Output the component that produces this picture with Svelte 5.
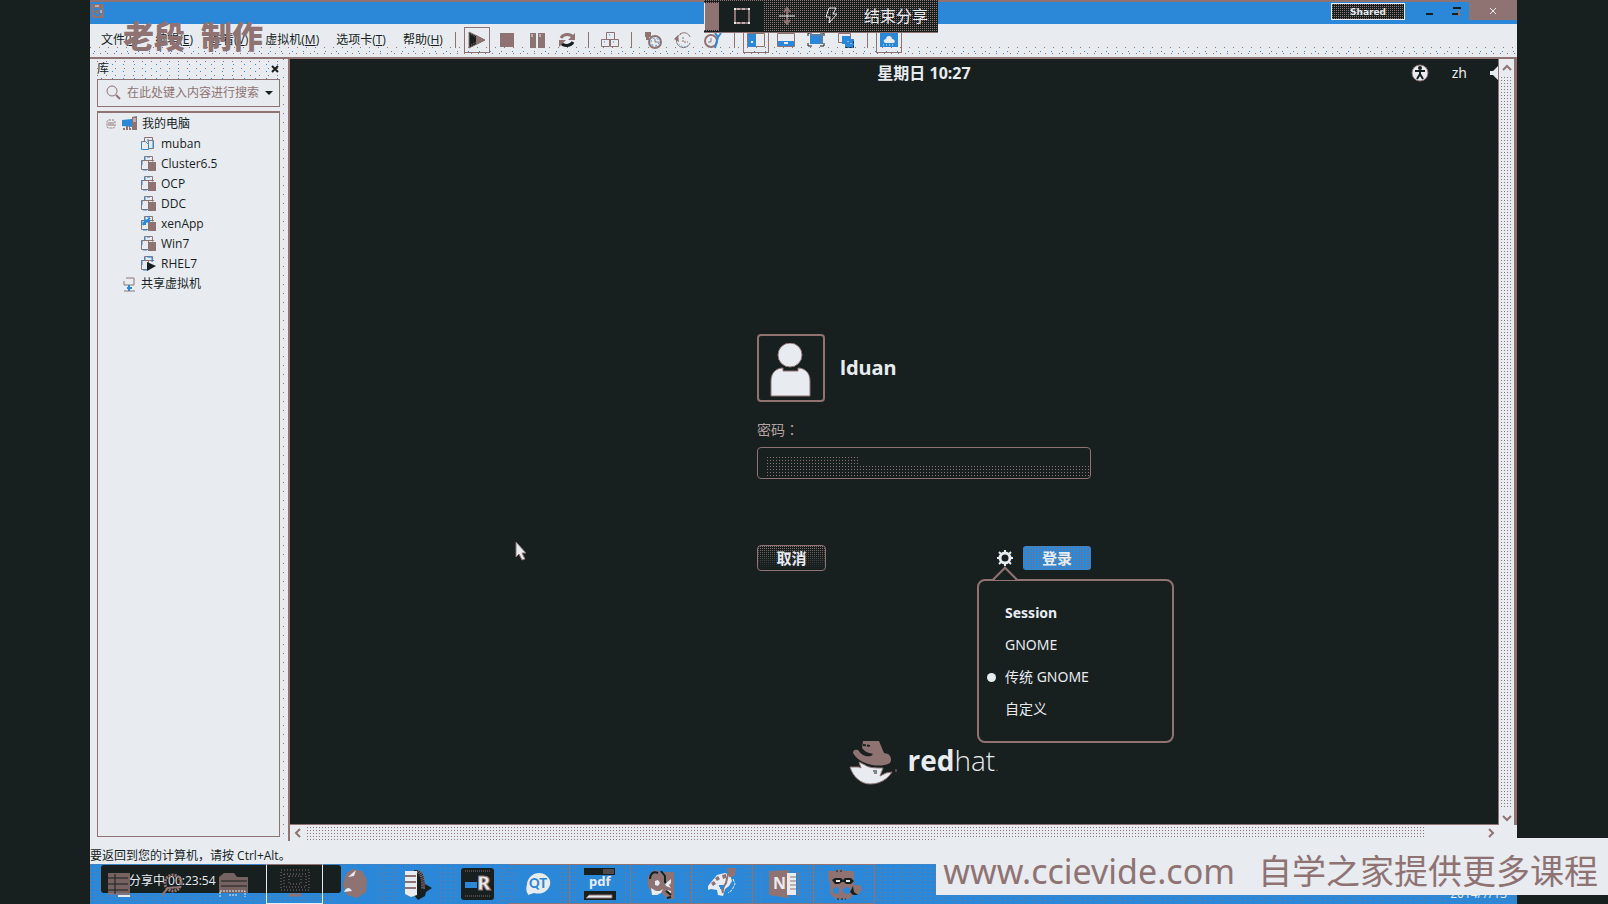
<script>
  const menus = [
    ['文件', 'F'], ['编辑', 'E'], ['查看', 'V'], ['虚拟机', 'M'], ['选项卡', 'T'], ['帮助', 'H']
  ];
  const machines = [
    { name: 'muban', state: 'plain' },
    { name: 'Cluster6.5', state: 'off' },
    { name: 'OCP', state: 'off' },
    { name: 'DDC', state: 'off' },
    { name: 'xenApp', state: 'win' },
    { name: 'Win7', state: 'off' },
    { name: 'RHEL7', state: 'on' }
  ];
  const tools = [
    { id: 'play', label: '启动', framed: true },
    { id: 'stop', label: '停止' },
    { id: 'pause', label: '挂起' },
    { id: 'cycle', label: '重新启动' },
    { id: 'sep1' },
    { id: 'cad', label: '发送按键' },
    { id: 'sep2' },
    { id: 'snap', label: '拍摄快照' },
    { id: 'revert', label: '恢复快照' },
    { id: 'manage', label: '管理快照' },
    { id: 'sep3' },
    { id: 'side', label: '显示库', framed: true },
    { id: 'thumb', label: '显示缩略图栏' },
    { id: 'full', label: '全屏' },
    { id: 'unity', label: 'Unity' },
    { id: 'sep4' },
    { id: 'console', label: '控制台视图', framed: true }
  ];
  const tasks = ['server', 'browser', 'folder', 'vm', 'globe', 'db', 'r', 'qt', 'pdf', 'faces', 'paint', 'note', 'qq'];
  const sessions = ['GNOME', '传统 GNOME', '自定义'];
  let session = $state('传统 GNOME');
  let query = $state('');
  let password = $state('');
</script>

{#snippet toolIcon(id)}
  <svg width="20" height="20" viewBox="0 0 20 20" fill="none" stroke="#8f7372" stroke-width="1">
    {#if id === 'play'}
      <path d="M2 2v16l16-8z" fill="#171f1f" /><path d="M9 5v10l9-5z" fill="#8f7372" stroke="none" /><path d="M4 4l9 6-9 5" stroke-dasharray="1 1" />
    {:else if id === 'stop'}
      <path d="M3 3h14v14H3z" fill="#8f7372" stroke="none" />
    {:else if id === 'pause'}
      <path d="M3 3h6v15H3zM11 3h7v15h-7z" fill="#8f7372" stroke="none" /><path d="M5 4v3M13 4v3" stroke="#e8ebf0" />
    {:else if id === 'cycle'}
      <path d="M4 8a7 6 0 0 1 12-1" stroke-width="3" /><path d="M18 3v7h-7z" fill="#8f7372" stroke="none" /><path d="M16 12a7 6 0 0 1-12 1" stroke="#171f1f" stroke-width="3" /><path d="M2 17v-7h7z" fill="#8f7372" stroke="none" />
    {:else if id === 'cad'}
      <path d="M6.500 2.500h8v7h-8zM1.500 9.500h8v7h-8zM10.500 9.500h8v7h-8z" /><path d="M9 5h1M4 12h1M13 12h1" stroke="#2b88d8" />
    {:else if id === 'snap'}
      <circle cx="12" cy="12" r="6" stroke-width="2" /><circle cx="12" cy="12" r="4" stroke="#2b88d8" stroke-dasharray="2 2" /><path d="M2 2h6v5H6v3H3V7H2z" fill="#8f7372" stroke="none" /><path d="M12 9v3h3" />
    {:else if id === 'revert'}
      <path d="M8 4a7 7 0 1 0 9 9M7 4c5-3 9 0 10 3" /><path d="M1 9l4-4 1 7z" fill="#8f7372" stroke="none" /><path d="M10 7v5h5" stroke-dasharray="2 1" /><path d="M6 14a7 6 0 0 0 9 2" stroke="#2b88d8" stroke-dasharray="1 2" />
    {:else if id === 'manage'}
      <circle cx="8" cy="11" r="6" stroke-width="2" /><path d="M8 8v4H5" /><path d="M12 3l3 4 3-4M15 7l-3 11" stroke="#2b88d8" stroke-width="2" />
    {:else if id === 'side'}
      <path d="M1.500 3.500h17v13h-17z" /><path d="M2 4h8v13H2z" fill="#2b88d8" stroke="none" /><path d="M5 11h2v2H5z" fill="#e8ebf0" stroke="none" />
    {:else if id === 'thumb'}
      <path d="M1.500 3.500h17v13h-17z" /><path d="M2 11h16v5H2z" fill="#2b88d8" stroke="none" /><path d="M8 13h4" stroke="#e8ebf0" stroke-width="2" />
    {:else if id === 'full'}
      <path d="M4 4h13v10H4z" fill="#2b88d8" stroke="none" /><path d="M2 6V3h4M14 3h4v3M2 13v3h4M14 16h4v-3" stroke="#171f1f" /><path d="M4 5h12v9" />
    {:else if id === 'unity'}
      <path d="M2.500 3.500h12v9h-12z" /><path d="M6 6h8v8H6zM9 9h9v9H9z" fill="#2b88d8" stroke="none" /><path d="M9.500 17.500h8v-8" stroke="#171f1f" stroke-dasharray="2 2" /><path d="M12 11v1M15 13v1" stroke="#e8ebf0" />
    {:else if id === 'console'}
      <path d="M1 3h18v14H1z" fill="#2b88d8" stroke="none" /><path d="M7 9c0-4 6-4 6 0 3 0 4 4 1 4H7c-3 0-3-4 0-4z" fill="#e8ebf0" stroke="none" /><path d="M4 15h12" stroke="#e8ebf0" stroke-dasharray="1 2" />
    {/if}
  </svg>
{/snippet}

{#snippet vmIcon(state)}
  <svg width="16" height="16" viewBox="0 0 16 16" fill="#e8ebf0" stroke="#8f7372">
    {#if state === 'plain'}
      <path d="M3.500 5.500v-4h8v4" /><path d="M7.500 4.500h5v8h-5z" /><path d="M7 3v3M12 5v7" stroke="#2b88d8" /><path d="M.5 5.500h4l3 3v5h-7z" stroke="#2b88d8" /><path d="M1 5.500h3" />
    {:else}
      <path d="M3.500 4.500v-4h8v5" /><path d="M4 1v3M6 1h3" stroke="#2b88d8" />
      <path d="M.5 4.500h7v9h-7z" /><path d="M1 4v5M2 14h4" stroke="#2b88d8" /><path d="M6 4.500h7" />
      {#if state === 'on'}
        <path d="M8 1h3v5" stroke="#2b88d8" fill="none" /><path d="M6 6v9l9-5z" fill="#171f1f" stroke="none" />
      {:else}
        {#if state === 'win'}<path d="M2 9l2-4 3-1 2-2M4 9V6l5-1" fill="none" stroke="#2b88d8" stroke-width="2" />{/if}
        <path d="M7 8V6h8v9H7z" fill="#8f7372" stroke="none" />
      {/if}
    {/if}
  </svg>
{/snippet}

{#snippet taskIcon(id)}
  <svg width="36" height="36" viewBox="0 0 36 36" fill="none" stroke="none">
    {#if id === 'server'}
      <path d="M10 7h22v22H10z" fill="#8f7372" opacity=".8" /><path d="M10 12h20M10 18h20M10 24h20M17 8v20" stroke="#171f1f" /><path d="M20 29h12v2H20z" fill="#e8ebf0" />
    {:else if id === 'browser'}
      <circle cx="18" cy="17" r="8" stroke="#8f7372" stroke-width="3" stroke-dasharray="2 1" /><path d="M7 29l6-7 13-1" stroke="#8f7372" stroke-width="2" />
    {:else if id === 'folder'}
      <path d="M3 11l5-4h10l3 4h11v16H3z" fill="#8f7372" opacity=".8" /><path d="M5 15h26M5 20h26" stroke="#171f1f" /><path d="M4 31v-6h25v6M13 29h9" stroke="#e8ebf0" stroke-dasharray="2 1" />
    {:else if id === 'vm'}
      <path d="M4 4h28v20H4zM7 8h22v13H7zM12 10h12v8H12z" stroke="#8f7372" stroke-dasharray="1 2" /><path d="M6 29h24" stroke="#2b88d8" stroke-width="2" stroke-dasharray="3 2" /><path d="M12 29h12" stroke="#8f7372" stroke-width="3" />
    {:else if id === 'globe'}
      <path d="M8 8l6-5 10 2 5 9-1 12-9 6-10-3-4-10z" fill="#8f7372" /><path d="M10 11l8-7-2 6zM6 26c3-6 6-4 8-1z" fill="#e8ebf0" />
    {:else if id === 'db'}
      <path d="M15 4c8 0 10 5 10 9l1 5 7 4-6 4-1 4-7 4-4-5z" fill="#171f1f" /><path d="M19 5c4 3 6 9 5 18" stroke="#8f7372" stroke-width="4" stroke-dasharray="1 1" /><path d="M6 5h12v24l-6 2-6-3z" fill="#e8ebf0" /><path d="M6 10h11M6 16h11M6 22h11" stroke="#8f7372" stroke-width="2" />
    {:else if id === 'r'}
      <rect x="1" y="2" width="33" height="32" rx="3" fill="#171f1f" /><path d="M5 5h25M5 30h25" stroke="#8f7372" stroke-dasharray="1 1" /><path d="M5 16h12v6H5z" fill="#2b88d8" /><text x="17" y="24" font-family="Open Sans" font-weight="800" font-size="20" fill="#e8ebf0" stroke="#8f7372">R</text>
    {:else if id === 'qt'}
      <path d="M7 28c-2-3-2-5-1-10 1-8 9-13 17-10 8 4 8 12 2 17-4 3-8 3-12 2l-6 2z" fill="#e8ebf0" /><text x="8" y="22" font-family="Lato" font-weight="900" font-size="13" fill="#2b88d8">QT</text>
    {:else if id === 'pdf'}
      <path d="M2 2h31v7H2zM2 25h32v9H2z" fill="#171f1f" /><path d="M21 3h11v5H21z" fill="#8f7372" opacity=".5" /><path d="M4 32l3-3h23v3z" fill="#e8ebf0" stroke="#8f7372" /><text x="7" y="20" font-family="Noto Sans" font-weight="700" font-size="13" fill="#e8ebf0">pdf</text>
    {:else if id === 'faces'}
      <path d="M7 8c3-5 9-4 12 0l3-2h9v27h-6l-6-6H9l-4-7V11z" fill="#8f7372" />
      <path d="M7 13c0-5 3-8 8-6M18 5l4 5v6l2 3M23 25l5 4M24 32l4-1" stroke="#171f1f" stroke-width="2" />
      <path d="M12 15l3-1 2 3-2 3-3-1zM8 22l5 3h4l3-2-2 4-4 2H9zM22 18l6-5v4l-2 2 2 3-5-2zM24 24l4 1v2z" fill="#e8ebf0" />
    {:else if id === 'paint'}
      <path d="M4 20l4-5 5-6 8-2 5 2 2 6-3 5-4 3-2 7-5-1-1-5-6-1-3 1z" fill="#e8ebf0" />
      <path d="M7 17l3-2 2 3-3 2zM11 12l3-2 2 3-3 2zM18 9l4-1v4l-3 1z" fill="#8f7372" />
      <path d="M24 8l-2 9-4 6 1 4M24 3h7l-1 6-4 1z" stroke="#8f7372" stroke-width="2" fill="#8f7372" />
      <path d="M15 20h5M16 22h3" stroke="#2b88d8" stroke-width="2" /><path d="M29 13l2 5-3 6-4 3" stroke="#e8ebf0" stroke-dasharray="3 1" />
    {:else if id === 'note'}
      <path d="M4 5l20-1v28L4 29z" fill="#8f7372" /><path d="M22 7h9v22h-9z" fill="#e8ebf0" /><path d="M25 11h6M25 15h6M25 19h6M25 23h6M31 7h3v22h-3" stroke="#8f7372" /><text x="8" y="23" font-family="Open Sans" font-weight="700" font-size="16" fill="#e8ebf0">N</text>
    {:else}
      <path d="M2 5h7l4-2 6 2h9v14h6l2 4-3 5-6 1-4 4H10l-6-5V17l-2-3z" fill="#8f7372" />
      <path d="M6 14l3-2h6l2 2 2-2h6l3 3-3 3h-5l-2-2h-2l-3 2H9z" fill="#171f1f" /><path d="M10 15h4M20 15h4" stroke="#e8ebf0" stroke-width="2" />
      <path d="M7 23l3-2 3 1v5l-4 1-2-2zM17 23l3-2 4 1v5l-4 1-3-2z" fill="#2b88d8" /><path d="M27 20l1 6 4 3h-5l-3-3z" fill="#171f1f" /><path d="M10 5h6M11 33h9" stroke="#171f1f" stroke-dasharray="2 2" />
    {/if}
  </svg>
{/snippet}

<div class="desktop">
  <div class="window">
    <header class="titlebar">
      <svg class="app" width="16" height="18" viewBox="0 0 16 18"><path d="M1 2h13v14H2z" fill="#8f7372" /><path d="M5 7h5v6H5z" fill="none" stroke="#2b88d8" stroke-width="2" stroke-dasharray="3 1" /><path d="M5 4h4M11 8v3" stroke="#e8ebf0" /></svg>
      <button class="shared">Shared</button>
      <button class="win" aria-label="最小化"><svg width="12" height="12"><path d="M2 8h7v2H2z" fill="#171f1f" /></svg></button>
      <button class="win" aria-label="还原"><svg width="12" height="12"><path d="M3 2h8v2H3zM2 8h6v2H2z" fill="#171f1f" /><path d="M9 5v6" stroke="#8f7372" stroke-width="2" /></svg></button>
      <button class="win close" aria-label="关闭"><svg width="8" height="8"><path d="M1 1l6 6M7 1L1 7" stroke="#e8ebf0" stroke-width="1" /></svg></button>
    </header>

    <div class="menubar">
      <nav class="menus">
        {#each menus as [name, key]}
          <button>{name}(<u>{key}</u>)</button>
        {/each}
      </nav>
      <div class="tools">
        <i class="sep first"></i>
        {#each tools as t (t.id)}
          {#if t.label}
            <button class:framed={t.framed} aria-label={t.label}>{@render toolIcon(t.id)}</button>
          {:else}
            <i class="sep"></i>
          {/if}
        {/each}
      </div>
    </div>

    <main class="work">
      <aside class="library">
        <div class="lib-head"><span>库</span><button aria-label="关闭库"><svg width="8" height="8"><path d="M1 1l6 6M7 1L1 7" stroke="#171f1f" stroke-width="2" /></svg></button></div>
        <div class="search">
          <svg width="15" height="16" viewBox="0 0 15 16" fill="none" stroke="#8f7372"><circle cx="6" cy="6" r="5" /><path d="M10 10l4 4" stroke-width="2" /></svg>
          <input aria-label="搜索" placeholder="在此处键入内容进行搜索" bind:value={query} />
          <button aria-label="搜索选项"><svg width="8" height="4"><path d="M0 0h8L4 4z" fill="#171f1f" /></svg></button>
        </div>
        <ul class="tree">
          <li class="root">
            <svg width="10" height="10" viewBox="0 0 10 10" fill="none" stroke="#8f7372"><rect x="1" y="1" width="8" height="8" rx="2" stroke-dasharray="2 1" /><path d="M2 4h6M2 6h6" /></svg>
            <svg width="16" height="16" viewBox="0 0 16 16"><path d="M11 1l5-1v14h-5z" fill="#8f7372" /><path d="M12 3h3M12 5h3" stroke="#e8ebf0" /><path d="M1 4l10-1v8l-10-1z" fill="#2b88d8" /><path d="M2 13h9M5 11h4" stroke="#8f7372" stroke-width="2" stroke-dasharray="2 1" /></svg>
            <span>我的电脑</span>
          </li>
          {#each machines as m}
            <li class="child">{@render vmIcon(m.state)}<span>{m.name}</span></li>
          {/each}
          <li class="shared-vms">
            <svg width="13" height="15" viewBox="0 0 13 15" fill="none" stroke="#8f7372"><path d="M3 1h8v7H1V4" /><path d="M1 14h11" /><path d="M6 8v6M4 11h5" stroke="#2b88d8" stroke-width="2" /></svg>
            <span>共享虚拟机</span>
          </li>
        </ul>
      </aside>

      <section class="viewer">
        <div class="screen">
          <div class="guest">
            <div class="topbar">
              <time>星期日 10:27</time>
              <div class="indicators">
                <svg width="18" height="18" viewBox="0 0 18 18"><circle cx="9" cy="9" r="8" fill="#e8ebf0" stroke="#8f7372" /><circle cx="9" cy="4" r="2" fill="#171f1f" /><path d="M4 7h10M9 6v5M9 10l-3 5M9 10l3 5" stroke="#171f1f" stroke-width="2" /></svg>
                <span>zh</span>
                <svg width="14" height="14" viewBox="0 0 14 14"><path d="M0 5h3l5-5v14L3 9H0z" fill="#e8ebf0" /><path d="M10 3c3 2 3 6 0 8" fill="none" stroke="#e8ebf0" /></svg>
              </div>
            </div>
            <form class="login" onsubmit={(e) => e.preventDefault()}>
              <div class="user">
                <div class="avatar"><svg width="42" height="54" viewBox="0 0 42 54" fill="#e8ebf0" stroke="#8f7372"><circle cx="20" cy="12" r="12" /><path d="M1 53V38c0-8 5-13 12-13v3h15v-3c7 0 12 5 12 13v15z" /></svg></div>
                <strong>lduan</strong>
              </div>
              <label for="pw">密码：</label>
              <input id="pw" type="password" bind:value={password} />
              <div class="actions">
                <button type="button" class="cancel">取消</button>
                <div class="gear">
                  <button type="button" aria-label="会话"><svg width="16" height="16" viewBox="0 0 16 16" fill="none" stroke="#e8ebf0"><circle cx="8" cy="8" r="5" stroke-width="3" /><path d="M8 0v3M8 13v3M0 8h3M13 8h3M2 2l3 3M11 11l3 3M14 2l-3 3M5 11l-3 3" stroke-width="2" /></svg></button>
                  <fieldset class="popup">
                    <legend>Session</legend>
                    {#each sessions as s}
                      <label><input type="radio" name="session" value={s} bind:group={session} />{s}</label>
                    {/each}
                  </fieldset>
                </div>
                <button class="submit">登录</button>
              </div>
            </form>
            <div class="brand">
              <svg width="48" height="46" viewBox="0 0 48 46"><path d="M14 1h16l5 12 4 1c3 2 4 6 2 9-5 3-13 3-18 2C15 23 8 20 4 13c0-3 2-4 5-3 4 6 9 7 13 6l2-2c-4-1-8-2-11-6z" fill="#8f7372" /><path d="M14 5l8 1" stroke="#171f1f" stroke-width="2" stroke-dasharray="3 1" /><path d="M1 27h9l2 1-2-6 6 3c4 3 11 3 18 3l-3 8 6-3 6-1c-5 8-13 12-22 12S4 37 1 27z" fill="#e8ebf0" stroke="#8f7372" /><path d="M24 31h4M25 33h3" stroke="#171f1f" /><path d="M47 29v3" stroke="#8f7372" /></svg>
              <span class="word"><b>red</b>hat<small>.</small></span>
            </div>
            <svg class="pointer" width="12" height="20" viewBox="0 0 12 20"><path d="M1 1v15l3-3 3 6 3-1-3-6h4z" fill="#e8ebf0" stroke="#8f7372" /></svg>
          </div>
        </div>
        <div class="vscroll">
          <svg width="10" height="8"><path d="M1 6l4-4 4 4" fill="none" stroke="#8f7372" stroke-width="2" /></svg>
          <i></i>
          <svg width="10" height="8"><path d="M1 2l4 4 4-4" fill="none" stroke="#8f7372" stroke-width="2" /></svg>
        </div>
        <div class="hscroll">
          <svg width="8" height="10"><path d="M6 1L2 5l4 4" fill="none" stroke="#8f7372" stroke-width="2" /></svg>
          <i></i>
          <svg width="8" height="10"><path d="M2 1l4 4-4 4" fill="none" stroke="#8f7372" stroke-width="2" /></svg>
        </div>
      </section>
    </main>

    <footer class="status">要返回到您的计算机，请按 Ctrl+Alt。</footer>

    <nav class="taskbar">
      {#each tasks as t}
        <button class="task {t}" class:plain={['server', 'browser', 'folder', 'globe', 'db', 'r'].includes(t)} aria-label={t}>{@render taskIcon(t)}</button>
      {/each}
      <span class="date">2014/7/13</span>
    </nav>
  </div>

  <div class="sharebar">
    <i class="tab"></i>
    <button class="pick" aria-label="选择区域"><svg width="18" height="18" viewBox="0 0 18 18" fill="none"><path d="M2 2h14v14H2z" stroke="#8f7372" stroke-width="2" /><path d="M4 2h10M4 16h10" stroke="#e8ebf0" stroke-dasharray="3 2" /><path d="M2 1v2M16 1v2M2 15v2M16 15v2" stroke="#e8ebf0" stroke-width="2" /></svg></button>
    <button aria-label="移动"><svg width="18" height="18" viewBox="0 0 18 18" fill="none" stroke="#8f7372"><path d="M9 1v16M6 5l3-4 3 4M6 13l3 4 3-4" stroke-width="2" /><path d="M1 9h16" stroke="#e8ebf0" /></svg></button>
    <button aria-label="闪电"><svg width="16" height="18" viewBox="0 0 16 18" fill="none" stroke="#e8ebf0"><path d="M5 1h7L9 7h4L5 16l1-6H2z" /></svg></button>
    <button class="end">结束分享</button>
  </div>

  <div class="timer">分享中 00:23:54</div>
  <div class="author"><span>老段</span><span>制作</span></div>
  <div class="site"><span>www.ccievide.com</span><span>自学之家提供更多课程</span></div>
</div>

<style>
  :global(body) { margin: 0; background: #171f1f; }
  .desktop {
    --dark: #171f1f; --blue: #2b88d8; --brown: #8f7372; --light: #e8ebf0;
    --dot: conic-gradient(from 270deg at 1px 1px, #8f7372 90deg, transparent 0);
    --bluedot: conic-gradient(from 270deg at 1px 1px, #2b88d8 90deg, transparent 0);
    position: relative; height: 100vh; min-height: 700px; box-sizing: border-box; overflow: hidden;
    padding: 0 91px 0 90px; background: var(--dark); color: var(--dark);
    font: 12px/20px "Open Sans", "Noto Sans CJK SC", sans-serif;
  }
  button { font: inherit; color: inherit; border: 0; padding: 0; margin: 0; background: none; display: flex; align-items: center; justify-content: center; box-sizing: border-box; }
  input { font: inherit; color: inherit; box-sizing: border-box; margin: 0; }
  svg { display: block; flex: none; }
  .window { height: 100%; display: flex; flex-direction: column; background: var(--light); }

  .titlebar { height: 24px; flex: none; display: flex; align-items: flex-start; background: var(--blue); border-top: 2px solid var(--brown); box-sizing: border-box; }
  .app { margin-right: auto; }
  .shared { width: 74px; height: 17px; margin: 1px 12px 0 0; border: 1px solid var(--light); color: var(--light); font: 700 9px/14px "DejaVu Sans", sans-serif; background: var(--dot) 0 0 / 2px 2px, var(--dark); }
  .win { width: 26px; height: 18px; }
  .close { width: 48px; background: var(--brown); }

  .menubar { height: 35px; flex: none; display: flex; padding: 0 0 2px 11px; border-bottom: 2px solid var(--brown); background: var(--dot) 0 23px / 9px 5px repeat-x, var(--bluedot) 4px 27px / 11px 5px repeat-x, var(--dot) 3px 29px / 7px 5px repeat-x, var(--light); box-sizing: border-box; }
  .menus { display: flex; gap: 17px; align-items: center; white-space: nowrap; }
  .tools { display: flex; align-items: center; margin-left: 10px; }
  .tools button { width: 30px; height: 26px; border: 1px solid transparent; }
  .tools .framed { width: 26px; margin: 0 2px; border-color: var(--brown); }
  .sep { width: 1px; height: 16px; background: var(--brown); margin: 0 6px; }
  .sep.first { margin: 0 6px 0 2px; }

  .work { flex: 1; min-height: 0; display: flex; }
  .library { width: 200px; flex: none; box-sizing: border-box; padding: 0 8px 4px 7px; display: flex; flex-direction: column; border-right: 2px solid var(--brown); background: var(--dot) 193px 0 / 9px 9px repeat-y, var(--light); }
  .lib-head { height: 20px; display: flex; justify-content: space-between; align-items: center; padding-right: 1px; background: var(--dot) 0 2px / 9px 7px, var(--bluedot) 4px 5px / 11px 7px; }
  .lib-head span { line-height: 18px; }
  .search { height: 28px; display: flex; align-items: center; gap: 6px; padding: 0 6px 0 8px; border: 1px solid var(--brown); box-sizing: border-box; }
  .search input { flex: 1; min-width: 0; width: 0; padding: 0; border: 0; background: none; }
  .search input::placeholder { color: var(--brown); opacity: 1; }
  .tree { flex: 1; list-style: none; margin: 4px 0 0; padding: 1px 0 0; border: 1px solid var(--brown); border-top-width: 2px; }
  .tree li { display: flex; align-items: center; height: 20px; }
  .root { padding-left: 8px; gap: 5px; }
  .child { padding-left: 43px; gap: 4px; }
  .shared-vms { padding-left: 25px; gap: 5px; }

  .viewer { flex: 1; min-width: 0; display: grid; grid-template: minmax(0, 1fr) 16px / minmax(0, 1fr) 18px; }
  .screen { overflow: hidden; background: var(--dark); color: var(--light); border-right: 1px solid var(--brown); border-bottom: 1px solid var(--brown); }
  .guest { position: relative; width: calc(100% + 60px); height: 100%; display: flex; flex-direction: column; align-items: center; }
  .topbar { position: relative; width: 100%; height: 28px; display: flex; align-items: center; justify-content: center; font: 700 16px/20px "Noto Sans", "Noto Sans CJK SC", sans-serif; }
  .indicators { position: absolute; right: 54px; display: flex; align-items: center; gap: 23px; font-weight: 400; font-size: 14px; }
  .login { width: 334px; margin: auto 0; padding-top: 80px; display: flex; flex-direction: column; font: 14px/20px "Noto Sans", "Noto Sans CJK SC", sans-serif; }
  .user { display: flex; align-items: center; gap: 15px; font-size: 20px; }
  .avatar { width: 68px; height: 68px; box-sizing: border-box; border: 2px solid var(--brown); border-radius: 4px; display: flex; justify-content: center; align-items: flex-end; padding-bottom: 3px; }
  .login > label { margin-top: 17px; color: #b5a2a1; font-family: "Noto Sans CJK TC", sans-serif; }
  .login > input { height: 32px; margin-top: 8px; padding: 0 10px; border: 1px solid var(--brown); border-radius: 4px; background: linear-gradient(var(--dark), var(--dark)) right 0 / calc(100% - 102px) 18px no-repeat, linear-gradient(var(--dark), var(--dark)) 0 0 / 100% 9px no-repeat, linear-gradient(var(--dark), var(--dark)) 0 0 / 8px 100% no-repeat, var(--dot) 0 0 / 3px 3px, var(--dark); }
  .actions { display: flex; align-items: center; margin-top: 66px; font-weight: 700; font-size: 15px; }
  .cancel { width: 69px; height: 26px; border: 1px solid var(--brown); border-radius: 4px; background: linear-gradient(transparent, var(--dark)), var(--dot) 0 0 / 2px 2px; }
  .submit { width: 68px; height: 24px; border-radius: 3px; background: var(--dot) 0 0 / 3px 2px, var(--blue); margin-left: 10px; }
  .gear { position: relative; margin-left: auto; }
  .popup { position: absolute; top: 29px; left: -20px; width: 197px; margin: 0; padding: 16px 0 16px 26px; box-sizing: border-box; border: 2px solid var(--brown); border-radius: 8px; background: var(--dark); font-weight: 400; font-size: 14px; }
  .popup::before { content: ""; position: absolute; left: 17px; top: -11px; width: 18px; height: 18px; box-sizing: border-box; border: solid var(--brown); border-width: 2px 0 0 2px; background: linear-gradient(135deg, var(--dark) 50%, transparent 0); transform: rotate(45deg); }
  .popup legend { float: left; width: 100%; padding: 0; line-height: 32px; font-weight: 700; }
  .popup label { clear: both; display: block; position: relative; line-height: 32px; }
  .popup input { appearance: none; position: absolute; left: -18px; top: 12px; width: 9px; height: 9px; border-radius: 50%; }
  .popup input:checked { background: var(--light); }
  .brand { display: flex; align-items: center; gap: 10px; margin-bottom: 36px; }
  .word { font: 28px/44px "Open Sans", sans-serif; font-weight: 300; }
  .word b { font-weight: 700; }
  .word small { color: var(--brown); font-size: 14px; }
  .pointer { position: absolute; left: 225px; top: 482px; }
  .vscroll { display: flex; flex-direction: column; align-items: center; padding: 5px 0 3px; border-right: 3px solid var(--brown); }
  .vscroll i { flex: 1; width: 11px; margin: 5px 0; background: var(--dot) 0 0 / 3px 3px; }
  .hscroll { grid-column: 1 / -1; display: flex; align-items: center; padding: 0 22px 0 4px; gap: 5px; }
  .hscroll i { flex: 1; height: 13px; margin-right: 58px; background: var(--dot) 0 0 / 3px 3px; }

  .status { height: 23px; flex: none; line-height: 30px; white-space: nowrap; }
  .taskbar { position: relative; height: 40px; flex: none; display: flex; overflow: hidden; background: var(--dot) 0 0 / 5px 4px, var(--blue); }
  .task { width: 61px; flex: none; background: linear-gradient(var(--blue), var(--blue)) center / 42px 34px no-repeat; border: solid var(--brown); border-width: 1px 1px 1px 0; }
  .task.server { width: 53px; }
  .task.plain { border-color: transparent; }
  .task.vm { position: relative; z-index: 3; background: none; width: 57px; margin: 0 3px 0 1px; border: 1px solid var(--light); border-top-color: var(--brown); }
  .task.server, .task.browser, .task.folder { position: relative; z-index: 3; background: none; }
  .date { margin-left: auto; padding-right: 10px; line-height: 20px; align-self: flex-end; color: var(--light); }

  .sharebar { position: absolute; left: 704px; top: 0; height: 33px; display: flex; align-items: center; color: var(--light); background: var(--dot) 0 0 / 2px 2px, var(--dark); border-bottom: 1px solid var(--brown); box-sizing: border-box; padding-right: 10px; }
  .sharebar button { width: 45px; height: 30px; }
  .sharebar .tab { width: 15px; height: 27px; background: var(--brown); border-left: 1px solid var(--light); box-sizing: border-box; }
  .sharebar .pick { background: var(--dark); }
  .sharebar .end { width: auto; margin-left: 10px; font-size: 16px; }
  .timer { position: absolute; left: 101px; bottom: 11px; width: 240px; height: 28px; line-height: 31px; padding-left: 28px; box-sizing: border-box; border-radius: 3px; background: var(--dark); color: var(--light); }
  .author { position: absolute; left: 123px; top: 17px; display: flex; gap: 16px; font: 900 31px/36px "Noto Sans CJK SC", sans-serif; color: var(--brown); white-space: nowrap; }
  .site { position: absolute; right: 0; bottom: 9px; height: 57px; padding: 8px 10px 0 7px; display: flex; align-items: center; gap: 23px; white-space: nowrap; background: var(--light); color: var(--brown); font: 34px/50px "Noto Sans", "Noto Sans CJK SC", sans-serif; box-sizing: border-box; }
</style>
